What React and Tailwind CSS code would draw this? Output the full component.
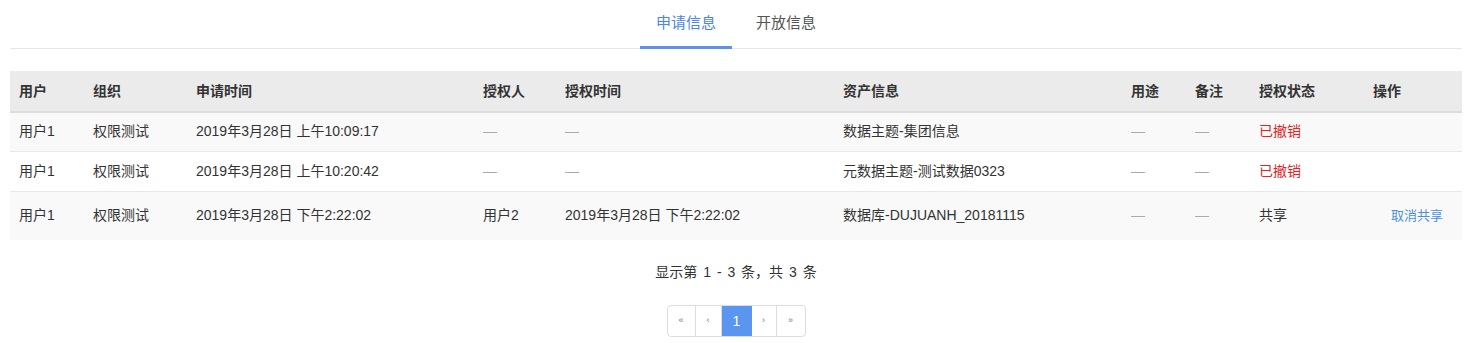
import React from "react";

const cols = [
  { k: "用户", w: 74 },
  { k: "组织", w: 103 },
  { k: "申请时间", w: 287 },
  { k: "授权人", w: 82 },
  { k: "授权时间", w: 278 },
  { k: "资产信息", w: 288 },
  { k: "用途", w: 64 },
  { k: "备注", w: 64 },
  { k: "授权状态", w: 114 },
  { k: "操作", w: 98 },
];

const rows = [
  {
    user: "用户1",
    org: "权限测试",
    time: "2019年3月28日 上午10:09:17",
    auth: null,
    authTime: null,
    asset: "数据主题-集团信息",
    status: "已撤销",
    revoked: true,
    bg: "bg-[#f9f9f9]",
    h: "h-[39px]",
    border: "border-b border-[#e8e8e8]",
  },
  {
    user: "用户1",
    org: "权限测试",
    time: "2019年3月28日 上午10:20:42",
    auth: null,
    authTime: null,
    asset: "元数据主题-测试数据0323",
    status: "已撤销",
    revoked: true,
    bg: "bg-white",
    h: "h-[40px]",
    border: "border-b border-[#e8e8e8]",
  },
  {
    user: "用户1",
    org: "权限测试",
    time: "2019年3月28日 下午2:22:02",
    auth: "用户2",
    authTime: "2019年3月28日 下午2:22:02",
    asset: "数据库-DUJUANH_20181115",
    status: "共享",
    revoked: false,
    bg: "bg-[#f9f9f9]",
    h: "h-[49px]",
    border: "",
  },
];

const Dash = () => <span className="text-[#aaaaaa]">—</span>;

export default function App() {
  return (
    <div
      className="w-[1472px] h-[343px] bg-white text-[#333333] text-[14px]"
      style={{ fontFamily: '"Liberation Sans", "Noto Sans CJK SC", sans-serif' }}
    >
      <div className="mx-[10px] border-b border-[#e6e6e6] flex justify-center gap-[8px]">
        <div className="px-[16px] pt-[12px] pb-[12px] text-[15px] text-[#4a86e8] border-b-[3px] border-[#5b93ea] leading-[22px] mb-[-1px]">
          申请信息
        </div>
        <div className="px-[16px] pt-[12px] pb-[12px] text-[15px] text-[#555555] border-b-[3px] border-transparent leading-[22px] mb-[-1px]">
          开放信息
        </div>
      </div>

      <div className="mx-[10px] mt-[22px]">
        <table className="table-fixed border-collapse w-[1452px]">
          <colgroup>
            {cols.map((c) => (
              <col key={c.k} style={{ width: c.w }} />
            ))}
          </colgroup>
          <thead>
            <tr className="bg-[#ebebeb] h-[41px] border-b-2 border-[#dddddd]">
              {cols.map((c) => (
                <th key={c.k} className="text-left font-bold pl-[9px] p-0 text-[#333333]">
                  {c.k}
                </th>
              ))}
            </tr>
          </thead>
          <tbody>
            {rows.map((r, i) => (
              <tr key={i} className={`${r.bg} ${r.h} ${r.border}`}>
                <td className="pl-[9px]">{r.user}</td>
                <td className="pl-[9px]">{r.org}</td>
                <td className="pl-[9px]">{r.time}</td>
                <td className="pl-[9px]">{r.auth ? r.auth : <Dash />}</td>
                <td className="pl-[9px]">{r.authTime ? r.authTime : <Dash />}</td>
                <td className="pl-[9px]">{r.asset}</td>
                <td className="pl-[9px]"><Dash /></td>
                <td className="pl-[9px]"><Dash /></td>
                <td className={`pl-[9px] ${r.revoked ? "text-[#e3231f]" : ""}`}>{r.status}</td>
                <td className="pl-[27px]">
                  {!r.revoked && (
                    <span className="text-[13px] text-[#4a90e2] cursor-pointer">取消共享</span>
                  )}
                </td>
              </tr>
            ))}
          </tbody>
        </table>
      </div>

      <div className="mt-[22px] text-center text-[14px] leading-[20px] text-[#333333] [word-spacing:2px]">
        显示第 1 - 3 条，共 3 条
      </div>

      <div className="mt-[23px] flex justify-center">
        <div className="flex h-[32px] border border-[#dddddd] rounded-[4px] overflow-hidden text-[#777777]">
          <div className="w-[28px] flex items-center justify-center text-[9px] border-r border-[#dddddd]">«</div>
          <div className="w-[26px] flex items-center justify-center text-[9px] border-r border-[#dddddd]">‹</div>
          <div className="w-[30px] flex items-center justify-center text-[14px] bg-[#5a95f0] text-white">1</div>
          <div className="w-[25px] flex items-center justify-center text-[9px] border-r border-[#dddddd]">›</div>
          <div className="w-[28px] flex items-center justify-center text-[9px]">»</div>
        </div>
      </div>
    </div>
  );
}
